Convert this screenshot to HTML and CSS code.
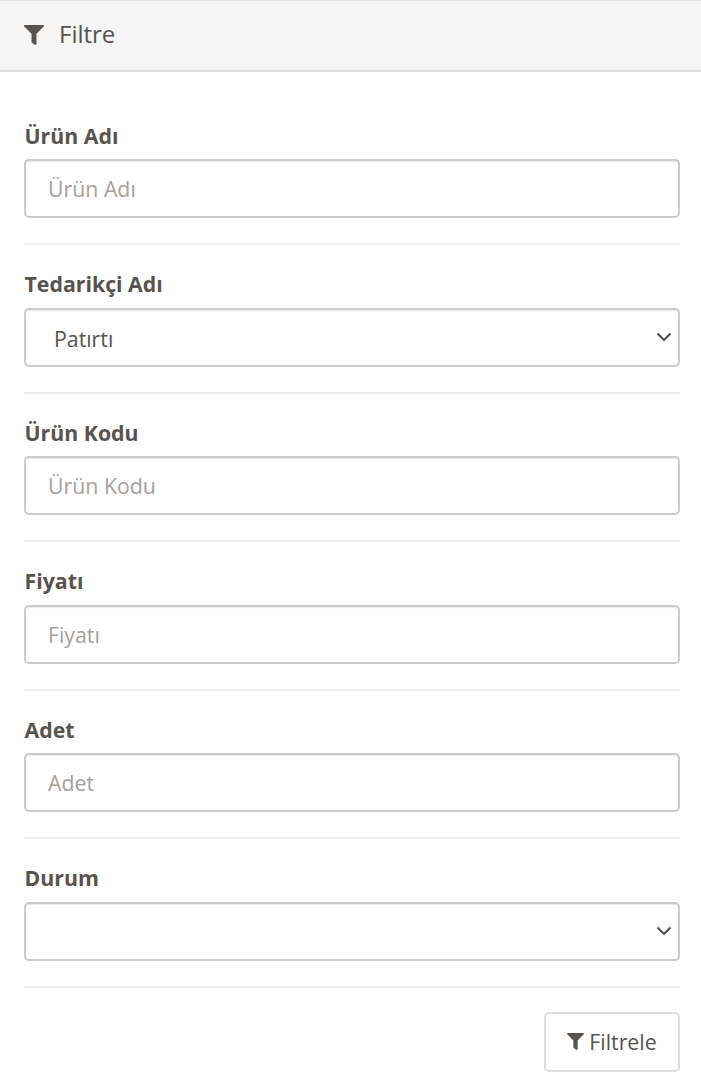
FILE: index.html
```html
<!DOCTYPE html>
<html>
<head>
  <meta charset="utf-8">
  <link rel="stylesheet" href="styles.css">
</head>
<body>
  <div class="panel-heading">
    <svg class="filter-icon" viewBox="0 0 512 512"><path d="M487.976 0H24.028C2.71 0-8.047 25.866 7.058 40.971L192 225.941V432c0 7.831 3.821 15.17 10.237 19.662l80 55.98C298.02 518.69 320 507.493 320 487.98V225.941l184.947-184.97C520.021 25.896 509.338 0 487.976 0z"/></svg>
    <span class="panel-title">Filtre</span>
  </div>
  <form class="filter-form">
    <div class="form-group">
      <label>Ürün Adı</label>
      <input class="form-control" type="text" placeholder="Ürün Adı">
    </div>
    <div class="form-group">
      <label>Tedarikçi Adı</label>
      <select class="form-control select-control">
        <option>Patırtı</option>
      </select>
    </div>
    <div class="form-group">
      <label>Ürün Kodu</label>
      <input class="form-control" type="text" placeholder="Ürün Kodu">
    </div>
    <div class="form-group">
      <label>Fiyatı</label>
      <input class="form-control" type="text" placeholder="Fiyatı">
    </div>
    <div class="form-group">
      <label>Adet</label>
      <input class="form-control" type="text" placeholder="Adet">
    </div>
    <div class="form-group">
      <label>Durum</label>
      <select class="form-control select-control">
        <option></option>
      </select>
    </div>
    <div class="form-actions">
      <button class="filter-button" type="button">
        <svg class="button-icon" viewBox="0 0 512 512"><path d="M487.976 0H24.028C2.71 0-8.047 25.866 7.058 40.971L192 225.941V432c0 7.831 3.821 15.17 10.237 19.662l80 55.98C298.02 518.69 320 507.493 320 487.98V225.941l184.947-184.97C520.021 25.896 509.338 0 487.976 0z"/></svg>
        Filtrele
      </button>
    </div>
  </form>
</body>
</html>
```

FILE: styles.css
```css
* {
  box-sizing: border-box;
}

body {
  margin: 0;
  background-color: #fff;
  color: #58534f;
  font-family: 'Open Sans', sans-serif;
}

.panel-heading {
  display: flex;
  align-items: center;
  height: 72px;
  padding-left: 24px;
  padding-bottom: 3px;
  background-color: #f5f5f5;
  border-top: 1px solid #e4e4e4;
  border-bottom: 2px solid #e0e0e0;
}

.filter-icon {
  width: 20px;
  height: 20px;
  margin-top: 1px;
  fill: #58534f;
}

.panel-title {
  margin-left: 15px;
  font-size: 24px;
  line-height: 32px;
}

.filter-form {
  padding: 48.5px 21px 0 24px;
}

.form-group {
  height: 124.5px;
  margin-bottom: 24px;
  border-bottom: 2px solid #eee;
}

.form-group label {
  display: block;
  height: 38.5px;
  padding-left: 0.5px;
  font-size: 21.3px;
  line-height: 30px;
  font-weight: 700;
}

.form-control {
  display: block;
  width: 100%;
  height: 59px;
  padding: 0 22px;
  background-color: #fff;
  border: 2px solid #ccc;
  border-radius: 5px;
  box-shadow: inset 0 1px 1px rgba(0, 0, 0, 0.08);
  color: #58534f;
  font-family: 'Open Sans', sans-serif;
  font-size: 21.3px;
}

.form-control::placeholder {
  color: #a5a19d;
}

.select-control {
  padding-top: 2px;
  padding-left: 28px;
  appearance: none;
  background-image: url("data:image/svg+xml,%3Csvg xmlns='http://www.w3.org/2000/svg' width='16' height='10' viewBox='0 0 16 10'%3E%3Cpath d='M1.5 1.5 8 8l6.5-6.5' fill='none' stroke='%23444' stroke-width='1.8'/%3E%3C/svg%3E");
  background-repeat: no-repeat;
  background-position: right 6px center;
}

.form-actions {
  display: flex;
  justify-content: flex-end;
}

.filter-button {
  display: flex;
  align-items: center;
  justify-content: center;
  gap: 5px;
  width: 136px;
  height: 60px;
  padding: 0;
  background-color: #fff;
  border: 2px solid #ddd;
  border-radius: 5px;
  color: #58534f;
  font-family: 'Open Sans', sans-serif;
  font-size: 21.3px;
}

.button-icon {
  width: 17px;
  height: 17px;
  fill: #58534f;
}
```
